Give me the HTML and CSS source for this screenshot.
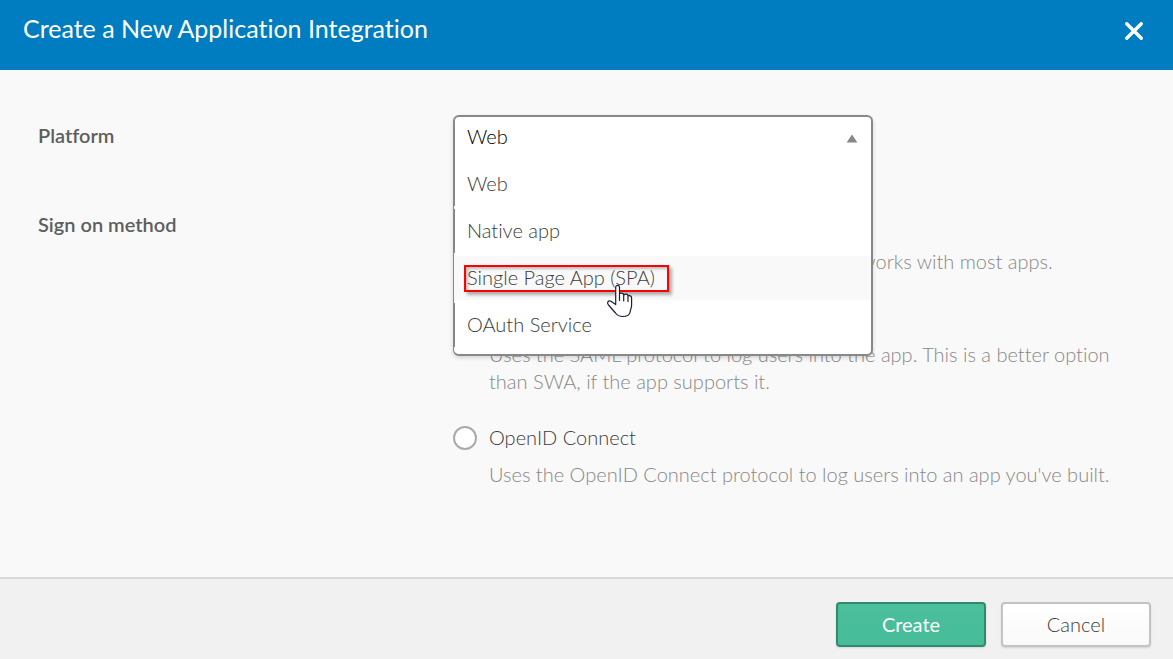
FILE: index.html
```html
<!DOCTYPE html>
<html lang="en">
<head>
<meta charset="utf-8">
<meta name="viewport" content="width=device-width, initial-scale=1">
<title>Create a New Application Integration</title>
<link rel="stylesheet" href="styles.css">
</head>
<body>
<form class="dialog">
  <header class="dialog-header">
    <h1 class="dialog-title">Create a New Application Integration</h1>
    <button class="close" type="button" aria-label="Close">
      <svg width="20" height="20" viewBox="0 0 20 20" aria-hidden="true"><path d="M2.700 2.700l14.600 14.600M17.300 2.700L2.700 17.300" fill="none" stroke="#fff" stroke-width="3.400" stroke-linecap="round"/></svg>
    </button>
  </header>

  <main class="dialog-body">
    <div class="row">
      <label class="row-label" for="platform">Platform</label>
      <div class="dropdown">
        <div class="dropdown-panel">
          <div class="dropdown-head">
            <select class="dropdown-select" id="platform">
              <option>Web</option>
              <option>Native app</option>
              <option>Single Page App (SPA)</option>
              <option>OAuth Service</option>
            </select>
            <svg class="dropdown-arrow" width="12" height="9" viewBox="0 0 12 9" aria-hidden="true"><path d="M6 .5L11.4 8.5H.6z" fill="#888"/></svg>
          </div>
          <ul class="options">
            <li class="option">Web</li>
            <li class="option">Native app</li>
            <li class="option option-active"><span class="option-text">Single Page App (SPA)</span>
              <svg class="cursor" width="28" height="34" viewBox="0 0 28 34" aria-hidden="true"><path d="M9.700 20.500V3.300C9.700.7 13.500.7 13.500 3.300V9.500C15.500 8.700 17.700 9.300 17.700 11C19.500 9.400 22 10 22 12C23.600 11 25.600 12 25.600 14V21C25.600 24 24.500 25 24.100 28C23.600 31.500 20 32.500 16.500 32.500C13.500 32.500 11.500 31.500 9.500 29L2.500 21C.3 18.300 2.500 16 5 17.300L9.700 20.500M13.500 9.500V16.500M17.700 11V17M22 12V17.500" fill="#fff" stroke="#1c1c30" stroke-width="1.200" stroke-linejoin="round" stroke-linecap="round"/></svg>
            </li>
            <li class="option">OAuth Service</li>
          </ul>
        </div>
      </div>
    </div>

    <div class="row" role="radiogroup" aria-labelledby="method-label">
      <span class="row-label" id="method-label">Sign on method</span>
      <div class="choices">
        <div class="choice">
          <input class="radio" type="radio" name="method" id="swa" aria-label="SWA" aria-describedby="swa-hint">
          <p class="hint" id="swa-hint">Uses credentials to sign in. This integration works with most apps.</p>
        </div>
        <div class="choice">
          <input class="radio" type="radio" name="method" id="saml" aria-label="SAML" aria-describedby="saml-hint">
          <p class="hint" id="saml-hint">Uses the SAML protocol to log users into the app. This is a better option than SWA, if the app supports it.</p>
        </div>
        <div class="choice">
          <input class="radio" type="radio" name="method" id="oidc" aria-describedby="oidc-hint">
          <label class="choice-label" for="oidc">OpenID Connect</label>
          <p class="hint" id="oidc-hint">Uses the OpenID Connect protocol to log users into an app you've built.</p>
        </div>
      </div>
    </div>
  </main>

  <footer class="dialog-footer">
    <button class="button button-primary" type="submit">Create</button>
    <button class="button" type="button">Cancel</button>
  </footer>
</form>
</body>
</html>
```
FILE: styles.css
```css
* { box-sizing: border-box; }

body {
  margin: 0;
  font: 300 20px/27px Lato, "Open Sans", sans-serif;
  font-variant-ligatures: none;
  color: #3c3c3c;
  background: #f9f9f9;
}

.dialog {
  display: flex;
  flex-direction: column;
  min-height: 100vh;
}

.dialog-header {
  display: flex;
  justify-content: space-between;
  align-items: flex-start;
  padding: 12px 29px 26px 23px;
  background: #007dc1;
}

.dialog-title {
  margin: 0;
  font-size: 25px;
  font-weight: 400;
  line-height: 32px;
  color: #fff;
}

.close {
  display: flex;
  margin-top: 9px;
  padding: 0;
  border: 0;
  background: none;
}

.dialog-body {
  flex: 1;
  display: flex;
  flex-direction: column;
  gap: 45px;
  padding: 45px 56px 45px 38px;
}

.row {
  display: grid;
  grid-template-columns: 415px minmax(0, 1fr);
}

.row-label {
  padding-top: 7px;
  font-weight: 600;
  color: #5e5e5e;
}

.dropdown {
  position: relative;
  height: 44px;
}

.dropdown-panel {
  position: absolute;
  z-index: 1;
  top: 0;
  left: 0;
  width: 420px;
  padding-bottom: 7px;
  border: 2px solid #888;
  border-left-width: 1px;
  border-radius: 6px;
  background: #fff;
  box-shadow: 0 2px 4px rgba(0, 0, 0, .15);
}

.dropdown-head {
  display: flex;
  align-items: flex-start;
  height: 45px;
  padding-right: 13px;
  border-left: 1px solid #888;
  border-top-left-radius: 4px;
}

.dropdown-select {
  flex: 1;
  height: 38px;
  padding: 0 12px;
  border: 0;
  appearance: none;
  background: none;
  font: inherit;
  color: #000;
}

.dropdown-arrow { margin-top: 17px; }

.options {
  display: flex;
  flex-direction: column;
  gap: 3px;
  margin: 0;
  padding: 0;
  list-style: none;
}

.option {
  position: relative;
  padding: 8px 12px 9px;
  border-left: 1px solid #888;
}

.option-active {
  border-left-color: #f9f9f9;
  background: #f9f9f9;
}

.option-text {
  position: relative;
  display: inline-block;
  vertical-align: top;
}

.option-text::after {
  content: "";
  position: absolute;
  inset: 1px -14px -1px -3px;
  border: 2px solid #f00;
  box-shadow: 3px 3px 3px rgba(0, 0, 0, .3), inset 2px 2px 3px rgba(0, 0, 0, .25);
}

.cursor {
  position: absolute;
  left: 151px;
  top: 28px;
  z-index: 1;
}

.choices {
  display: flex;
  flex-direction: column;
  gap: 29px;
  padding-top: 7px;
}

.choice {
  display: grid;
  grid-template-columns: 24px minmax(0, 1fr);
  grid-template-rows: 27px auto;
  gap: 10px 12px;
  align-items: center;
}

.radio {
  width: 24px;
  height: 24px;
  margin: 0;
  border: 2px solid #aaa;
  border-radius: 50%;
  appearance: none;
  background: #fff;
}

.hint {
  grid-column: 2;
  grid-row: 2;
  margin: 0;
  color: #888;
}

.dialog-footer {
  display: flex;
  justify-content: flex-end;
  gap: 15px;
  padding: 23px 22px 12px;
  border-top: 2px solid #d9d9d9;
  background: #f1f1f1;
}

.button {
  width: 150px;
  height: 45px;
  padding: 0;
  border: 2px solid #c3c3c3;
  border-radius: 4px;
  background: linear-gradient(#fff, #f9f9f9);
  box-shadow: 0 1px 2px rgba(0, 0, 0, .12);
  font: inherit;
  color: #3c3c3c;
}

.button-primary {
  border-color: #2f8a6e;
  background: linear-gradient(#4cbf9c, #46bc98);
  font-weight: 400;
  color: #fff;
}
```
